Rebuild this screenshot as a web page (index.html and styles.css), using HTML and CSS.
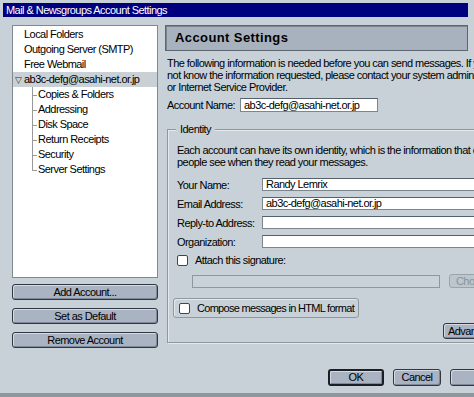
FILE: index.html
```html
<!DOCTYPE html>
<html>
<head>
<meta charset="utf-8">
<link rel="stylesheet" href="styles.css">
</head>
<body>
<div class="window">
  <div class="titlebar">Mail &amp; Newsgroups Account Settings</div>
  <div class="main">
    <div class="left">
      <div class="tree">
        <div class="item">Local Folders</div>
        <div class="item">Outgoing Server (SMTP)</div>
        <div class="item">Free Webmail</div>
        <div class="item sel"><span class="twisty">▽</span>ab3c-defg@asahi-net.or.jp</div>
        <div class="children">
          <div class="child">Copies &amp; Folders</div>
          <div class="child">Addressing</div>
          <div class="child">Disk Space</div>
          <div class="child">Return Receipts</div>
          <div class="child">Security</div>
          <div class="child">Server Settings</div>
        </div>
      </div>
      <div class="acctbtns">
        <div class="btn">Add Account...</div>
        <div class="btn">Set as Default</div>
        <div class="btn">Remove Account</div>
      </div>
    </div>
    <div class="right">
      <div class="header">Account Settings</div>
      <p class="intro">The following information is needed before you can send messages. If you do not know the information requested, please contact your system administrator or Internet Service Provider.</p>
      <div class="acctrow">
        <span class="acctlabel">Account Name:</span>
        <div class="input acctinput">ab3c-defg@asahi-net.or.jp</div>
      </div>
      <div class="identity">
        <div class="legend">Identity</div>
        <p class="idtext">Each account can have its own identity, which is the information that other people see when they read your messages.</p>
        <div class="fields">
          <span>Your Name:</span><div class="input">Randy Lemrix</div>
          <span>Email Address:</span><div class="input">ab3c-defg@asahi-net.or.jp</div>
          <span>Reply-to Address:</span><div class="input"></div>
          <span>Organization:</span><div class="input"></div>
        </div>
        <div class="check"><span class="cb"></span>Attach this signature:</div>
        <div class="sigrow">
          <div class="input disabled"></div>
          <div class="btn choose">Choose...</div>
        </div>
        <div class="htmlbox"><span class="cb"></span>Compose messages in HTML format</div>
        <div class="advrow"><div class="btn adv">Advanced...</div></div>
      </div>
      <div class="dlgbtns">
        <div class="btn dlg ok">OK</div>
        <div class="btn dlg">Cancel</div>
        <div class="btn dlg help">Help</div>
      </div>
    </div>
  </div>
</div>
</body>
</html>
```

FILE: styles.css
```css
html, body {
  margin: 0;
  padding: 0;
  width: 474px;
  height: 397px;
  overflow: hidden;
  background: #c7d1d7;
}
.window {
  box-sizing: border-box;
  width: 474px;
  height: 397px;
  padding: 3px 0 0 3px;
  background: #c7d1d7;
  border-bottom: 4px solid #8e979d;
  font-family: "Liberation Sans", Arial, sans-serif;
  font-size: 11px;
  letter-spacing: -0.55px;
  color: #000;
  overflow: hidden;
}
.titlebar {
  width: 465px;
  height: 14px;
  line-height: 14px;
  background: #00007e;
  color: #fff;
  padding-left: 3px;
  box-sizing: border-box;
  font-size: 11px;
}
.main {
  display: flex;
  gap: 7px;
  padding: 8px 0 0 9px;
}
.left {
  width: 146px;
  flex: none;
}
.tree {
  box-sizing: border-box;
  height: 253px;
  background: #fff;
  border: 1px solid #7f8990;
  padding-top: 1px;
}
.item {
  height: 15px;
  line-height: 15px;
  padding-left: 11px;
  white-space: nowrap;
}
.item.sel {
  background: #c9d1d6;
  padding-left: 2px;
}
.twisty {
  display: inline-block;
  width: 9px;
  font-size: 9px;
  letter-spacing: 0;
  color: #333;
}
.children {
  padding-left: 19px;
}
.child {
  position: relative;
  height: 15px;
  line-height: 15px;
  padding-left: 6px;
  white-space: nowrap;
}
.child::before {
  content: "";
  position: absolute;
  left: 0;
  top: 0;
  height: 15px;
  border-left: 1px solid #999;
}
.child:last-child::before {
  height: 8px;
}
.child::after {
  content: "";
  position: absolute;
  left: 0;
  top: 8px;
  width: 5px;
  border-top: 1px solid #999;
}
.acctbtns {
  display: flex;
  flex-direction: column;
  gap: 8px;
  margin-top: 6px;
}
.btn {
  box-sizing: border-box;
  height: 16px;
  line-height: 14px;
  text-align: center;
  background: #a9b3c2;
  border: 1px solid #2f3741;
  border-radius: 3px;
  box-shadow: inset 1px 1px 0 #d3dae3, inset -1px -1px 0 #7f8898;
  white-space: nowrap;
}
.right {
  width: 345px;
  flex: none;
}
.header {
  box-sizing: border-box;
  width: 303px;
  height: 26px;
  line-height: 24px;
  background: #a8b2be;
  border: 1px solid #5c6670;
  box-shadow: inset 1px 1px 0 #7c8691;
  padding-left: 9px;
  font-weight: bold;
  font-size: 13px;
  letter-spacing: 0.4px;
}
.intro {
  margin: 6px 0 0 2px;
  line-height: 12px;
  width: 342px;
}
.acctrow {
  display: flex;
  align-items: center;
  margin: 5px 0 0 2px;
  white-space: nowrap;
}
.acctlabel {
  width: 73px;
}
.input {
  box-sizing: border-box;
  height: 14px;
  line-height: 12px;
  background: #fff;
  border: 1px solid #7d868d;
  border-top-color: #55606a;
  padding-left: 3px;
  white-space: nowrap;
}
.acctinput {
  width: 138px;
}
.identity {
  position: relative;
  box-sizing: border-box;
  margin: 17px 0 0 2px;
  border: 1px solid #8e989f;
  box-shadow: 1px 1px 0 #e4e9ec, inset 1px 1px 0 #e4e9ec;
  padding: 14px 0 4px 9px;
  height: 214px;
}
.legend {
  position: absolute;
  top: -7px;
  left: 8px;
  padding: 0 4px;
  background: #c7d1d7;
  line-height: 12px;
}
.idtext {
  margin: 0;
  line-height: 12px;
  width: 330px;
}
.fields {
  display: grid;
  grid-template-columns: 85px 1fr;
  row-gap: 6px;
  align-items: center;
  margin-top: 10px;
  white-space: nowrap;
}
.fields .input {
  height: 13px;
  line-height: 11px;
}
.check {
  display: flex;
  align-items: center;
  margin-top: 6px;
  height: 12px;
}
.cb {
  box-sizing: border-box;
  width: 11px;
  height: 11px;
  background: #fff;
  border: 1px solid #3e4750;
  border-radius: 2px;
  margin-right: 7px;
  flex: none;
}
.sigrow {
  display: flex;
  align-items: center;
  gap: 9px;
  margin: 8px 0 0 15px;
}
.input.disabled {
  width: 248px;
  height: 13px;
  background: #c9d2d7;
  border-color: #8f989e;
}
.btn.choose {
  width: 56px;
  height: 14px;
  line-height: 12px;
  background: #bcc6cd;
  border-color: #9aa3aa;
  color: #8a949b;
  box-shadow: none;
}
.htmlbox {
  box-sizing: border-box;
  display: flex;
  align-items: center;
  width: 186px;
  height: 20px;
  margin: 10px 0 0 -4px;
  padding-left: 5px;
  border: 1px solid #8e989f;
  border-radius: 3px;
  box-shadow: inset 1px 1px 0 #e4e9ec;
  white-space: nowrap;
  letter-spacing: -0.7px;
}
.advrow {
  display: flex;
  justify-content: flex-end;
  margin-top: 5px;
  padding-right: 16px;
}
.btn.adv {
  width: 50px;
  padding-left: 4px;
  text-align: left;
}
.dlgbtns {
  display: flex;
  gap: 9px;
  margin-top: 26px;
  padding-left: 163px;
}
.btn.dlg {
  flex: none;
  width: 48px;
  height: 17px;
  line-height: 15px;
}
.btn.ok {
  width: 56px;
  border: 2px solid #1a1f26;
  line-height: 13px;
}
.btn.dlg.help {
  width: 70px;
}
```
